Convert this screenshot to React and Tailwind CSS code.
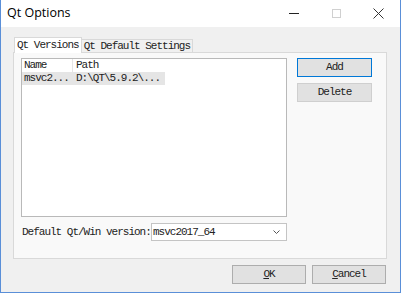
export default function App() {
  const mono = { fontFamily: '"Liberation Mono", "DejaVu Sans Mono", monospace' };

  return (
    <div className="w-[401px] h-[293px] flex flex-col border-x border-b border-[#5a8fd8] bg-[#f0f0f0] text-[#222] overflow-hidden">
      {/* title bar */}
      <div className="h-[27px] bg-white flex items-center shrink-0">
        <span className="pl-[6px] text-[12.5px] font-['Open_Sans',sans-serif] text-black">Qt Options</span>
        <div className="ml-auto flex items-center h-full">
          <div className="w-[42px] flex justify-center">
            <div className="w-[10px] h-px bg-[#222]" />
          </div>
          <div className="w-[42px] flex justify-center">
            <div className="w-[9px] h-[9px] border border-[#d0d0d0]" />
          </div>
          <div className="w-[42px] flex justify-center mr-[1px]">
            <svg width="11" height="11" viewBox="0 0 11 11">
              <path d="M0.5 0.5 L10.5 10.5 M10.5 0.5 L0.5 10.5" stroke="#333" strokeWidth="1" />
            </svg>
          </div>
        </div>
      </div>

      {/* body */}
      <div className="flex-1 flex flex-col pl-[12px] pt-[10px] text-[11px] tracking-[-1px]" style={mono}>
        {/* tabs */}
        <div className="flex items-end h-[15px] ml-[1px]">
          <div className="relative z-10 h-[16px] -mb-px px-[2px] bg-white border-x border-t border-[#d9d9d9] flex items-center">
            Qt Versions
          </div>
          <div className="h-[13px] px-[2px] border-r border-t border-[#d9d9d9] bg-[#f0f0f0] flex items-center">
            Qt Default Settings
          </div>
        </div>

        {/* pane */}
        <div className="w-[374px] h-[207px] border border-[#d9d9d9] bg-[#f9f9f9] pl-[7px] pt-[5px] flex flex-col">
          <div className="flex">
            <div className="w-[266px] h-[159px] border border-[#b9b9b9] bg-white">
              <div className="flex h-[13px] items-center">
                <div className="w-[51px] pl-[2px] border-r border-[#e5e5e5] h-full flex items-center">Name</div>
                <div className="pl-[3px]">Path</div>
              </div>
              <div className="flex h-[13px] items-center bg-[#e5e5e5] w-[143px]">
                <div className="w-[52px] pl-[2px]">msvc2...</div>
                <div className="pl-[2px]">D:\QT\5.9.2\...</div>
              </div>
            </div>
            <div className="ml-[10px] flex flex-col gap-[6px]">
              <button className="w-[75px] h-[19px] border border-[#0078d7] bg-[#e1e1e1] flex items-center justify-center">
                Add
              </button>
              <button className="w-[75px] h-[19px] border border-[#cfcfcf] bg-[#e1e1e1] flex items-center justify-center">
                Delete
              </button>
            </div>
          </div>
          <div className="flex items-center mt-[6px]">
            <span className="pl-[1px] w-[130px]">Default Qt/Win version:</span>
            <div className="w-[136px] h-[18px] border border-[#c4c4c4] bg-white flex items-center pl-[1px]">
              <span>msvc2017_64</span>
              <svg className="ml-auto mr-[6px]" width="7" height="4" viewBox="0 0 7 4">
                <path d="M0.5 0.5 L3.5 3.5 L6.5 0.5" stroke="#555" fill="none" strokeWidth="1" />
              </svg>
            </div>
          </div>
        </div>

        {/* dialog buttons */}
        <div className="flex gap-[6px] mt-[6px] ml-[219px]">
          <button className="w-[74px] h-[19px] border border-[#adadad] bg-[#e1e1e1] flex items-center justify-center">
            <span><span className="underline">O</span>K</span>
          </button>
          <button className="w-[74px] h-[19px] border border-[#adadad] bg-[#e1e1e1] flex items-center justify-center">
            <span><span className="underline">C</span>ancel</span>
          </button>
        </div>
      </div>
    </div>
  );
}
